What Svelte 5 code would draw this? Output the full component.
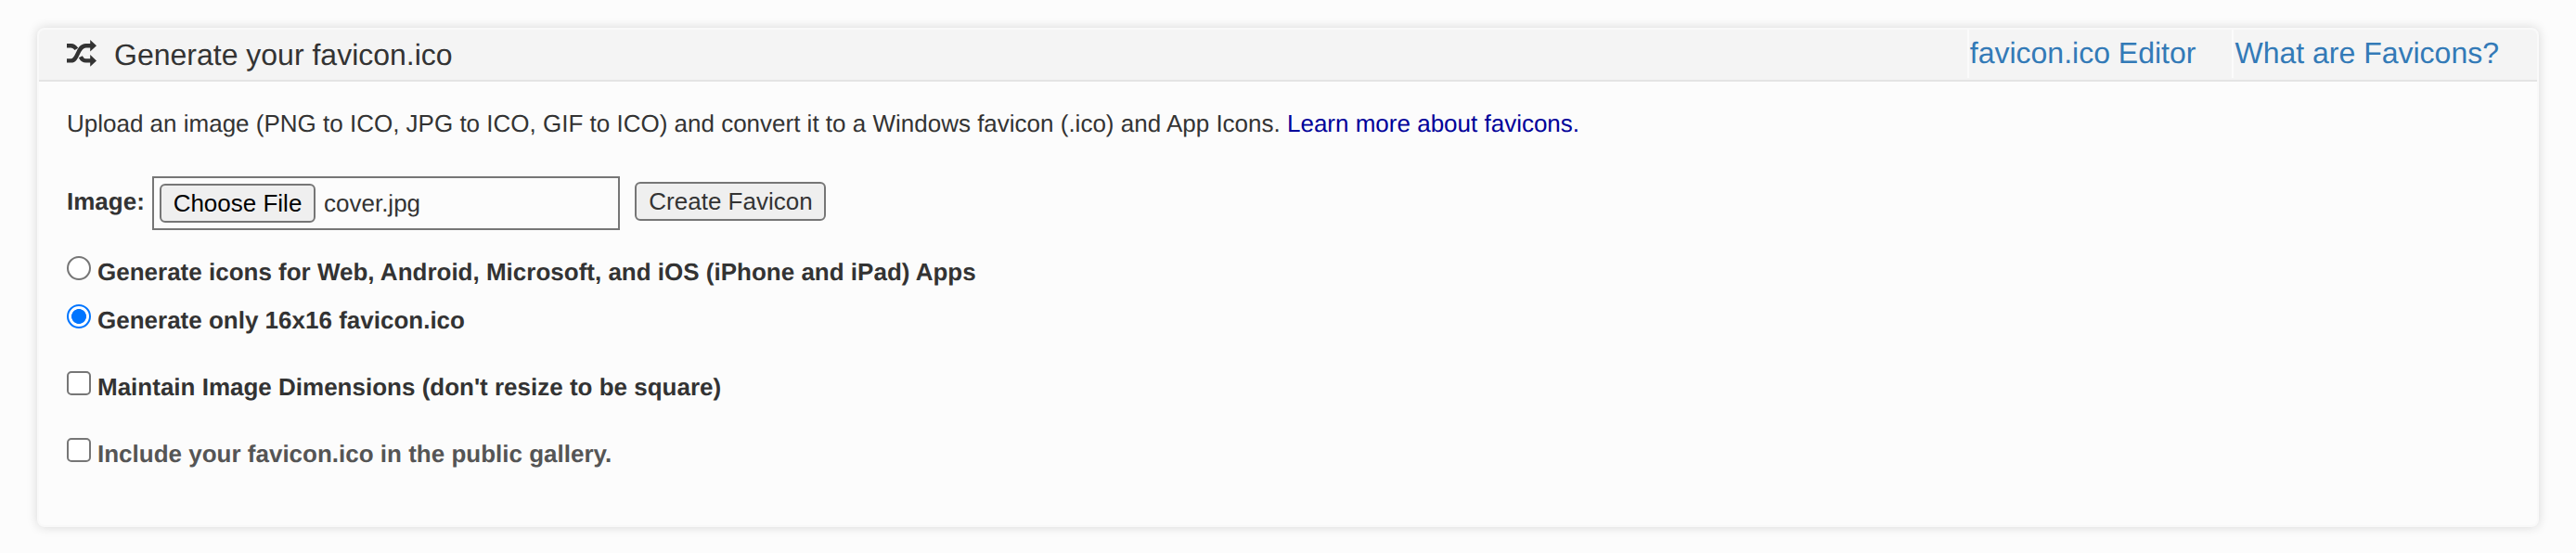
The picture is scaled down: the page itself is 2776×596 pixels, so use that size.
<script>
  let target = $state('favicon');
  const links = ['favicon.ico Editor', 'What are Favicons?'];
</script>

<section class="card">
  <header>
    <svg class="shuffle" viewBox="0 0 32 29" width="32" height="29" aria-hidden="true">
      <g fill="none" stroke="#333" stroke-width="4.4">
        <path d="M0 6.2H4.6C7.2 6.2 8.8 7.4 10.4 9.9" />
        <path d="M0 22.4H4.4C12.6 22.4 11 6.2 20.6 6.2H26" />
        <path d="M14.8 18.2C16.2 20.9 17.8 22.4 20.6 22.4H26" />
      </g>
      <path fill="#333" d="M25.2 0 32 6.2 25.2 12.6ZM25.2 16.1 32 22.4 25.2 28.8Z" />
    </svg>
    <h1>Generate your favicon.ico</h1>
    <nav>
      {#each links as link}
        <a href="#top">{link}</a>
      {/each}
    </nav>
  </header>

  <div class="body">
    <p>
      Upload an image (PNG to ICO, JPG to ICO, GIF to ICO) and convert it to a Windows favicon (.ico) and App Icons. <a href="#learn">Learn more about favicons.</a>
    </p>

    <div class="upload">
      <b>Image:</b>
      <div class="file">
        <button class="choose">Choose File</button>
        <span>cover.jpg</span>
      </div>
      <button class="create">Create Favicon</button>
    </div>

    <label>
      <input type="radio" bind:group={target} value="apps" />
      <span>Generate icons for Web, Android, Microsoft, and iOS (iPhone and iPad) Apps</span>
    </label>
    <label class="close">
      <input type="radio" bind:group={target} value="favicon" />
      <span>Generate only 16x16 favicon.ico</span>
    </label>
    <label>
      <input type="checkbox" />
      <span>Maintain Image Dimensions (don't resize to be square)</span>
    </label>
    <label class="muted">
      <input type="checkbox" />
      <span>Include your favicon.ico in the public gallery.</span>
    </label>
  </div>
</section>

<style>
  :global(body) {
    background: #fcfcfc;
  }
  :global(#app) {
    display: flow-root;
  }
  .card {
    box-sizing: border-box;
    height: 538px;
    margin: 30px 40px 28px;
    border: 2px solid #f9f9f9;
    border-radius: 8px;
    background: #fcfcfc;
    box-shadow: 0 0 12px rgba(0, 0, 0, 0.15);
    color: #333;
    font: 26px/36px "Liberation Sans", Arial, sans-serif;
    text-rendering: geometricPrecision;
  }
  header {
    display: flex;
    height: 54px;
    padding-left: 30px;
    border-bottom: 2px solid #e4e4e4;
    border-radius: 6px 6px 0 0;
    background: #f4f4f4;
  }
  .shuffle {
    margin-top: 11px;
  }
  h1 {
    margin: 0 auto 0 19px;
    padding-top: 7px;
    font-size: 32px;
    font-weight: 400;
    line-height: 40px;
  }
  nav {
    display: flex;
  }
  nav a {
    height: 47px;
    padding: 5px 41px 0 1px;
    box-sizing: border-box;
    height: 52px;
    border-left: 2px solid #fbfbfb;
    color: #337ab7;
    font-size: 32px;
    line-height: 40px;
    text-decoration: none;
  }
  nav a:first-child {
    padding-right: 39px;
  }
  .body {
    padding: 27px 30px 0;
  }
  p {
    margin: 0 0 39px;
  }
  p a {
    color: #000099;
    text-decoration: none;
  }
  .upload {
    display: flex;
    height: 58px;
    margin-bottom: 27px;
  }
  .upload b {
    width: 92px;
    padding-top: 9px;
  }
  .file {
    box-sizing: border-box;
    display: flex;
    width: 504px;
    padding: 6px;
    border: 2px solid #767676;
  }
  .file span {
    padding: 3px 0 0 9px;
  }
  button {
    box-sizing: border-box;
    height: 42px;
    padding: 0;
    border: 2px solid #767676;
    border-radius: 6px;
    background: #efefef;
    font: inherit;
  }
  .choose {
    width: 168px;
    color: #000;
  }
  .create {
    width: 206px;
    margin: 6px 0 0 16px;
    padding-left: 1px;
    color: #333;
  }
  label {
    display: flex;
    gap: 7px;
    margin-bottom: 36px;
    font-weight: 700;
  }
  label:has(+ .close) {
    margin-bottom: 16px;
  }
  .muted {
    color: #555;
  }
  input {
    appearance: none;
    box-sizing: border-box;
    width: 26px;
    height: 26px;
    margin: 1px 0 0;
    border: 2px solid #767676;
    border-radius: 5px;
    background: #fff;
  }
  input[type='radio'] {
    border-radius: 50%;
  }
  input[type='radio']:checked {
    border-color: #0075ff;
    background: radial-gradient(circle, #0075ff 7.6px, #fff 8.3px);
  }
</style>
